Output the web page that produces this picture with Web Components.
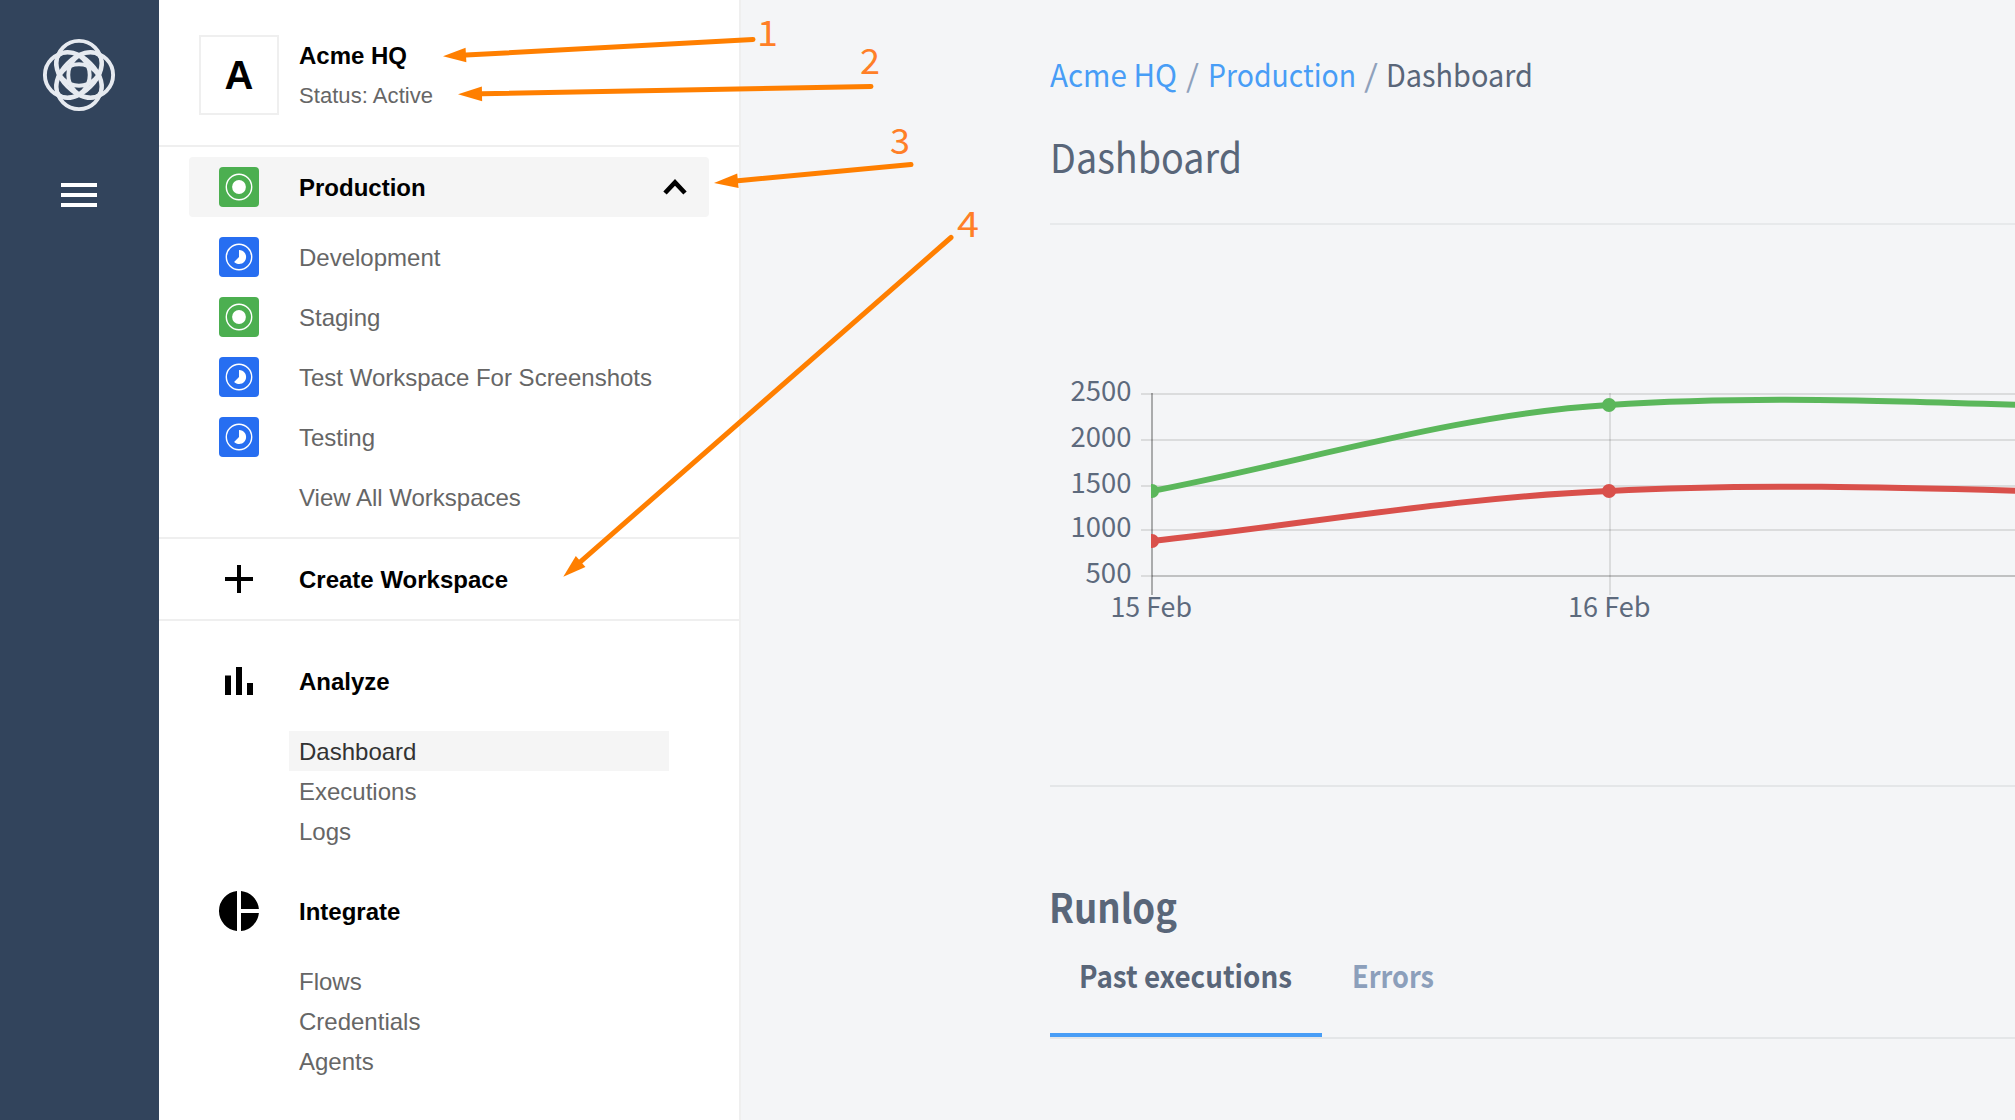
<!DOCTYPE html>
<html lang="en">
<head>
<meta charset="utf-8">
<title>Dashboard</title>
<style>
html,body{margin:0;height:100%;overflow:hidden}
body{font-family:"Liberation Sans",Arial,sans-serif;background:#f4f5f7}
</style>
</head>
<body>
<app-shell>
  <app-rail slot="rail"></app-rail>
  <app-sidebar slot="side">
    <org-header slot="head" initial="A" name="Acme HQ">Status: Active</org-header>
    <workspace-row slot="spaces" kind="live" current>Production</workspace-row>
    <workspace-row slot="spaces" kind="trial">Development</workspace-row>
    <workspace-row slot="spaces" kind="live">Staging</workspace-row>
    <workspace-row slot="spaces" kind="trial">Test Workspace For Screenshots</workspace-row>
    <workspace-row slot="spaces" kind="trial">Testing</workspace-row>
    <workspace-row slot="spaces">View All Workspaces</workspace-row>
    <nav-head slot="create" icon="plus">Create Workspace</nav-head>
    <nav-group icon="bars" label="Analyze">
      <nav-item active>Dashboard</nav-item><nav-item>Executions</nav-item><nav-item>Logs</nav-item>
    </nav-group>
    <nav-group icon="pie" label="Integrate">
      <nav-item>Flows</nav-item><nav-item>Credentials</nav-item><nav-item>Agents</nav-item>
    </nav-group>
  </app-sidebar>
  <dash-main slot="main"></dash-main>
  <callout-layer slot="over"></callout-layer>
</app-shell>
<script>
const define = (name, html, init) => customElements.define(name, class extends HTMLElement {
  constructor(){ super(); this.attachShadow({mode:'open'}); }
  connectedCallback(){
    this.shadowRoot.innerHTML = typeof html === 'function' ? html(this) : html;
    if (init) init(this, this.shadowRoot);
  }
});
const HUM = '"Noto Sans CJK SC","Open Sans",sans-serif';
const ICONS = {
  live:'<svg width="40" height="40"><rect width="40" height="40" rx="4" fill="#4caf50"/><circle cx="20" cy="20" r="12.7" fill="none" stroke="#fff" stroke-width="1.4"/><circle cx="20" cy="20" r="6.9" fill="#fff"/></svg>',
  trial:'<svg width="40" height="40"><rect width="40" height="40" rx="4" fill="#276ef1"/><circle cx="20" cy="20" r="12.7" fill="none" stroke="#fff" stroke-width="1.4"/><path d="M20 13a7 7 0 1 1-4.9 11.9L20 20z" fill="#fff"/></svg>',
  plus:'<svg width="40" height="40"><path d="M6 20h28M20 6v28" stroke="#000" stroke-width="4"/></svg>',
  bars:'<svg width="40" height="40"><path d="M6 14.5h6V34H6zM17 6h6v28h-6zM28 22h6v12h-6z"/></svg>',
  pie:'<svg width="40" height="40"><path d="M18 .1v39.8A20 20 0 0 1 18 .1zM22 .1A20 20 0 0 1 39.9 18H22zM22 22h17.9A20 20 0 0 1 22 39.9z"/></svg>'
};
define('app-shell', `<style>
:host{display:flex;position:relative;width:2015px;height:1120px;overflow:hidden}
</style><slot name="rail"></slot><slot name="side"></slot><slot name="main"></slot><slot name="over"></slot>`);

define('app-rail', `<style>
:host{display:flex;flex-direction:column;align-items:center;box-sizing:border-box;width:159px;flex:none;background:#32445c;padding-top:37px;gap:70px;padding-right:1px}
svg{display:block}
</style>
<svg width="76" height="76" viewBox="-38 -38 76 76" fill="none" stroke="#e6eaf0" stroke-width="3.9">
<circle cy="-11.7" r="22.4"/><circle cy="11.7" r="22.4"/><circle cx="-11.7" r="22.4"/><circle cx="11.7" r="22.4"/>
<ellipse rx="28.1" ry="16.4" transform="rotate(45)"/><ellipse rx="28.1" ry="16.4" transform="rotate(-45)"/></svg>
<svg width="36" height="24" fill="#fff"><path d="M0 0h36v4H0zM0 10h36v4H0zM0 20h36v4H0z"/></svg>`);

define('app-sidebar', `<style>
:host{display:flex;flex-direction:column;box-sizing:border-box;width:582px;flex:none;background:#fff;border-right:2px solid #efefef}
.spaces{padding:10px 30px 10px;border-bottom:2px solid #efefef}
.create{height:80px;display:flex;align-items:center;border-bottom:2px solid #efefef}
.groups{display:flex;flex-direction:column;gap:40px;padding-top:40px}
</style><slot name="head"></slot><div class="spaces"><slot name="spaces"></slot></div>
<div class="create"><slot name="create"></slot></div><div class="groups"><slot></slot></div>`);

define('org-header', el => `<style>
:host{display:flex;box-sizing:border-box;height:147px;padding:35px 40px 30px;gap:20px;border-bottom:2px solid #efefef}
.av{box-sizing:border-box;width:80px;height:80px;border:2px solid #efefef;display:flex;align-items:center;justify-content:center;font:bold 40px "Liberation Sans",sans-serif;color:#000}
.t{display:flex;flex-direction:column;height:80px;padding-top:1px}
b{font-size:24px;line-height:40px;color:#000}
span{font-size:22px;line-height:40px;color:#666;letter-spacing:.06px}
</style><div class="av">${el.getAttribute('initial')}</div><div class="t"><b>${el.getAttribute('name')}</b><span><slot></slot></span></div>`);

define('workspace-row', el => `<style>
:host{display:flex;align-items:center;box-sizing:border-box;height:60px;padding-left:30px;font-size:24px;color:#666}
:host([current]){background:#f5f5f5;border-radius:4px;color:#000;font-weight:bold;margin-bottom:10px}
.i{width:40px;height:40px;margin-right:40px}
.l{flex:1;line-height:30px;padding-top:1px}
svg{display:block}.c{margin-right:22px}
</style><div class="i">${ICONS[el.getAttribute('kind')]||''}</div><div class="l"><slot></slot></div>
${el.hasAttribute('current')?'<svg class="c" width="24" height="16" style="margin-top:-1px"><path d="M2 14L12 3.4L22 14" fill="none" stroke="#000" stroke-width="4.6"/></svg>':''}`);

define('nav-head', el => `<style>
:host{display:flex;align-items:center;height:40px;padding-left:60px;gap:40px;font-size:24px;font-weight:bold;color:#000}
svg{display:block}.l{line-height:30px;padding-top:1px}
</style>${ICONS[el.getAttribute('icon')]}<div class="l"><slot></slot></div>`);

define('nav-group', el => `<style>
:host{display:block}.items{padding:30px 0 0 130px}
</style><nav-head icon="${el.getAttribute('icon')}">${el.getAttribute('label')}</nav-head><div class="items"><slot></slot></div>`);

define('nav-item', `<style>
:host{display:block;box-sizing:border-box;width:380px;height:40px;line-height:41px;padding-left:10px;font-size:24px;color:#666}
:host([active]){background:#f5f5f5;color:#333}
</style><slot></slot>`);

/* Text set to an exact advance width by horizontal scaling. */
define('fit-text', el => `<style>
:host{display:inline-block;width:${el.getAttribute('w')}px;white-space:nowrap}
span{display:inline-block;transform-origin:0 50%}
</style><span><slot></slot></span>`, (el, root) => {
  const s = root.querySelector('span');
  const w = s.getBoundingClientRect().width;
  if (w) s.style.transform = `scaleX(${el.getAttribute('w') / w})`;
});

define('dash-main', `<style>
:host{display:flex;flex-direction:column;box-sizing:border-box;flex:1;min-width:0;padding-left:309px;font-family:${HUM};color:#596679}
.bc{display:flex;font-size:30.7px;line-height:44px;padding-top:52px;height:46px}
.bc a{color:#489df6}.bc i{font-style:normal;color:#8fa1bb}
h1,h2{margin:0;font-size:40.2px;line-height:56px;height:56px}
h1{font-weight:400;margin-top:30px}
h2{font-weight:700;margin-top:91px;margin-left:-1px}
.hr{height:2px;background:#e7e9eb;flex:none}
h1+.hr{margin-top:39px}
dash-chart{margin-top:135px}
dash-chart+.hr{margin-top:145px;background:#e4e6e8}
.tabs{display:flex;height:100px;font-size:30.7px;line-height:44px;font-weight:700;border-bottom:2px solid #e4e6e8;margin-top:3px}
.tab{box-sizing:border-box;height:100px;padding:16px 30px 0;color:#8c9fbb}
.tab.on{color:#596679;border-bottom:4px solid #489df6;padding:16px 30px 0 29px}
</style>
<div class="bc"><a><fit-text w="127">Acme HQ</fit-text></a><i style="margin:0 9px 0 9px"><fit-text w="13">/</fit-text></i><a><fit-text w="148">Production</fit-text></a><i style="margin:0 8px 0 8px"><fit-text w="14">/</fit-text></i><fit-text w="147">Dashboard</fit-text></div>
<h1><fit-text w="192">Dashboard</fit-text></h1>
<div class="hr"></div>
<dash-chart></dash-chart>
<div class="hr"></div>
<h2><fit-text w="128">Runlog</fit-text></h2>
<div class="tabs"><div class="tab on"><fit-text w="213">Past executions</fit-text></div><div class="tab"><fit-text w="82">Errors</fit-text></div></div>`);

define('dash-chart', () => {
  const ox = 1050, oy = 360, ys = [[2500,394],[2000,440],[1500,486],[1000,530],[500,576]];
  const grid = ys.map(([v,y]) => `<path d="M1141 ${y}H2015" stroke="#000" stroke-opacity=".1" stroke-width="2"/><text x="${v===500?1085.5:1070.5}" y="${y+6.5}" textLength="${v===500?46:61}" lengthAdjust="spacingAndGlyphs">${v}</text>`).join('');
  return `<style>:host{display:block;height:280px}svg{display:block}text{font:27.4px ${HUM};fill:#5d6a7d}</style>
<svg width="965" height="280" viewBox="${ox} ${oy} 965 280">${grid}
<path d="M1152 576H2015" stroke="#000" stroke-opacity=".12" stroke-width="2"/>
<path d="M1152 393V595" stroke="#000" stroke-opacity=".3" stroke-width="2"/>
<path d="M1610 393V595" stroke="#000" stroke-opacity=".1" stroke-width="2"/>
<text x="1110.5" y="616.7" textLength="81.5" lengthAdjust="spacingAndGlyphs">15 Feb</text>
<text x="1568" y="616.7" textLength="82.5" lengthAdjust="spacingAndGlyphs">16 Feb</text>
<clipPath id="c"><rect x="1151" y="380" width="900" height="200"/></clipPath>
<g clip-path="url(#c)" fill="none" stroke-width="6">
<path stroke="#d9504b" d="M1152 541C1304 524.5 1457 497 1609 491C1761 483 1914 488 2066 492"/><g fill="#d9504b"><circle cx="1609" cy="491" r="7"/><circle cx="1152" cy="541" r="7"/></g>
<path stroke="#5bb75b" d="M1152 491C1304 462 1457 414 1609 405C1761 395 1914 401.5 2066 406.5"/><g fill="#5bb75b"><circle cx="1152" cy="491" r="7"/><circle cx="1609" cy="405" r="7"/></g>
</g></svg>`;
});

define('callout-layer', () => {
  const arrow = (x1,y1,x2,y2,len=21) => {
    const d = Math.hypot(x1-x2,y1-y2), ux=(x1-x2)/d, uy=(y1-y2)/d, bx=x2+ux*len, by=y2+uy*len;
    return `<path d="M${x1} ${y1}L${bx} ${by}" stroke="#ff7f00" stroke-width="5" stroke-linecap="round"/><path fill="#ff7f00" d="M${x2} ${y2}L${bx-uy*7.3} ${by+ux*7.3}L${bx+uy*7.3} ${by-ux*7.3}z"/>`;
  };
  const num = (n,x,y,w) => `<text x="${x}" y="${y}" textLength="${w}" lengthAdjust="spacingAndGlyphs">${n}</text>`;
  return `<style>:host{position:absolute;inset:0;pointer-events:none}svg{display:block}text{font:35px ${HUM};fill:#ff7f27}</style>
<svg width="2015" height="1120">${arrow(753,39.5,443,56.3,23)}${arrow(871,86.5,458,94.3,24)}${arrow(911,164.5,714,183,24)}${arrow(951,237.5,563.3,576.7,23)}
${num(1,757,45.7,21)}${num(2,860,73.7,20)}${num(3,890,153.7,20)}${num(4,957,236.7,22)}</svg>`;
});
</script>
</body>
</html>
